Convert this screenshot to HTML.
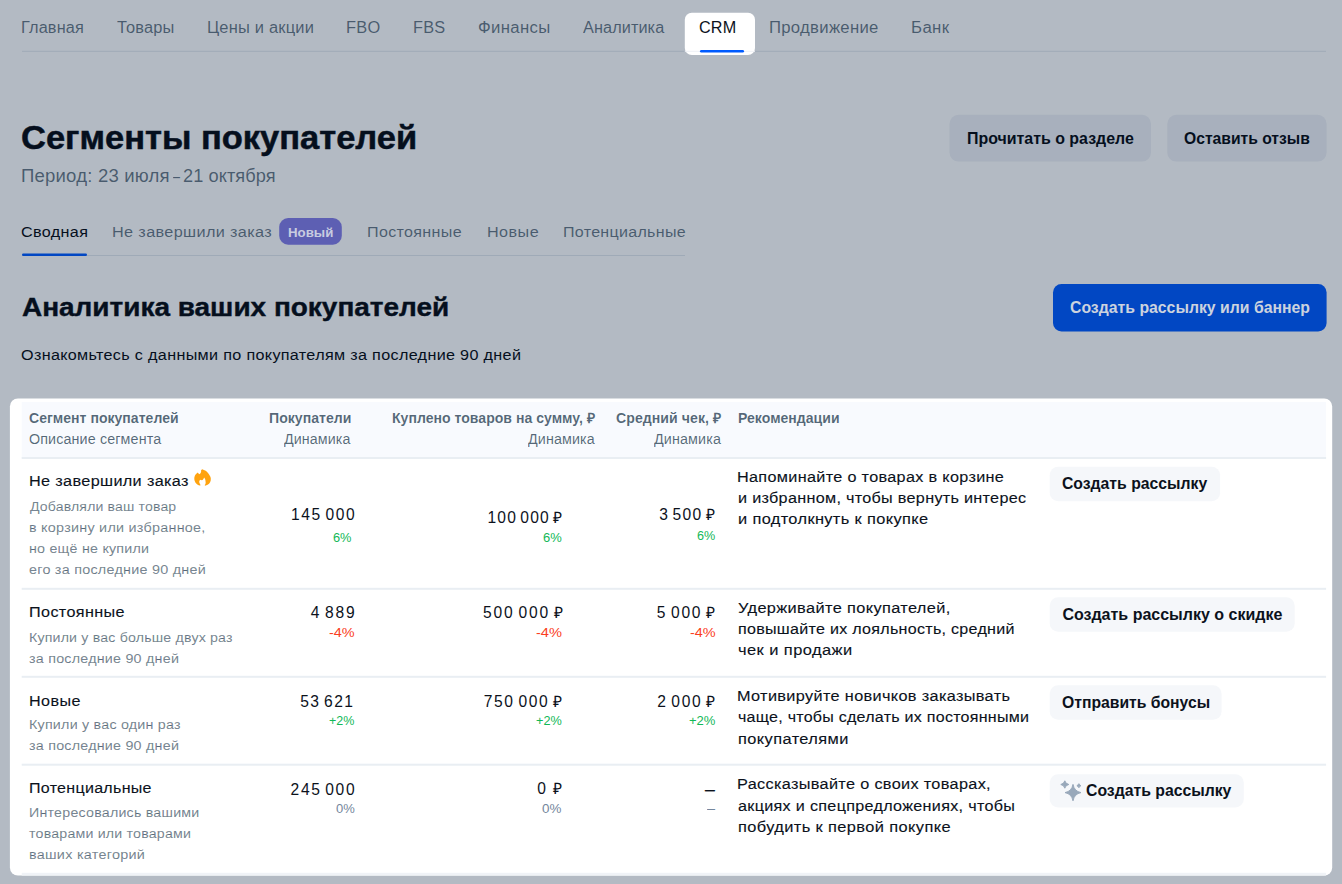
<!DOCTYPE html>
<html lang="ru"><head><meta charset="utf-8"><title>Сегменты покупателей</title>
<style>
*{box-sizing:border-box}
html,body{margin:0;padding:0}
body{width:1342px;height:884px;position:relative;overflow:hidden;background:#fff;font-family:"Liberation Sans",sans-serif;color:#001a34}
.abs,.t{position:absolute}
.t{white-space:pre;line-height:20px;margin:0;transform-origin:0 50%}
.base-layer,.dim-layer,.top-layer{position:absolute;left:0;top:0;width:1342px;height:884px}
.dim-layer{background:rgba(4,27,56,.3)}
</style></head>
<body>
<div class="base-layer">
<svg class="abs" style="left:0;top:0" width="1342" height="884" viewBox="0 0 1342 884" aria-hidden="true">
<rect x="22" y="50.8" width="1304" height="1" fill="#e3e8ee"/>
<rect x="700" y="50" width="44" height="2.5" rx="1.2" fill="#005bff"/>
<rect x="949.5" y="114.8" width="201.5" height="46.8" rx="9" fill="#eff1f6"/>
<rect x="1167.3" y="114.8" width="159.3" height="46.8" rx="9" fill="#eff1f6"/>
<rect x="1053" y="283.9" width="273.6" height="47.6" rx="8.5" fill="#005bff"/>
<rect x="22" y="255" width="663" height="1" fill="#e3e8ee"/>
<rect x="22" y="253.5" width="65" height="2.5" rx="1.2" fill="#005bff"/>
<rect x="279.2" y="218" width="62.6" height="26.7" rx="9" fill="#857de8"/>
</svg>
<span class="t" style="left:20.5px;top:17.6px;font-size:16px;color:rgba(0,26,52,.6);transform:scaleX(1.0188);letter-spacing:0.125px">Главная</span>
<span class="t" style="left:117.4px;top:17.6px;font-size:16px;color:rgba(0,26,52,.6);transform:scaleX(1.0245);letter-spacing:0.175px">Товары</span>
<span class="t" style="left:206.8px;top:17.6px;font-size:16px;color:rgba(0,26,52,.6);transform:scaleX(1.0297);letter-spacing:0.178px">Цены и акции</span>
<span class="t" style="left:346.1px;top:17.6px;font-size:16px;color:rgba(0,26,52,.6);transform:scaleX(1.0233);letter-spacing:0.250px">FBO</span>
<span class="t" style="left:413.3px;top:17.6px;font-size:16px;color:rgba(0,26,52,.6);transform:scaleX(1.0193);letter-spacing:0.196px">FBS</span>
<span class="t" style="left:477.9px;top:17.6px;font-size:16px;color:rgba(0,26,52,.6);transform:scaleX(1.0444);letter-spacing:0.317px">Финансы</span>
<span class="t" style="left:583.0px;top:17.6px;font-size:16px;color:rgba(0,26,52,.6);transform:scaleX(1.0152);letter-spacing:0.099px">Аналитика</span>
<span class="t" style="left:768.8px;top:17.6px;font-size:16px;color:rgba(0,26,52,.6);transform:scaleX(1.0432);letter-spacing:0.282px">Продвижение</span>
<span class="t" style="left:911.0px;top:17.6px;font-size:16px;color:rgba(0,26,52,.6);transform:scaleX(1.0486);letter-spacing:0.363px">Банк</span>
<span class="t" style="left:20.7px;top:128.4px;font-size:33px;color:#070b12;transform:scaleX(1.0452);-webkit-text-stroke:0.5px #070b12;font-weight:700">Сегменты покупателей</span>
<span class="t" style="left:20.7px;top:166.0px;font-size:18px;color:rgba(0,26,52,.6);transform:scaleX(1.0298);letter-spacing:0.195px">Период: 23 июля</span>
<span class="t" style="left:173.0px;top:166.0px;font-size:18px;color:rgba(0,26,52,.6);transform:scaleX(0.6983)">–</span>
<span class="t" style="left:182.9px;top:166.0px;font-size:18px;color:rgba(0,26,52,.6);transform:scaleX(1.0110);letter-spacing:0.073px">21 октября</span>
<span class="t" style="left:967.0px;top:129.2px;font-size:16px;color:#070b12;transform:scaleX(0.9952);font-weight:700">Прочитать о разделе</span>
<span class="t" style="left:1184.3px;top:129.2px;font-size:16px;color:#070b12;transform:scaleX(0.9785);font-weight:700">Оставить отзыв</span>
<span class="t" style="left:21.1px;top:221.5px;font-size:15.3px;color:#070b12;transform:scaleX(1.0548);letter-spacing:0.354px">Сводная</span>
<span class="t" style="left:111.9px;top:221.5px;font-size:15.3px;color:rgba(0,26,52,.6);transform:scaleX(1.0622);letter-spacing:0.332px">Не завершили заказ</span>
<span class="t" style="left:366.9px;top:221.5px;font-size:15.3px;color:rgba(0,26,52,.6);transform:scaleX(1.0513);letter-spacing:0.315px">Постоянные</span>
<span class="t" style="left:486.9px;top:221.5px;font-size:15.3px;color:rgba(0,26,52,.6);transform:scaleX(1.0569);letter-spacing:0.424px">Новые</span>
<span class="t" style="left:562.9px;top:221.5px;font-size:15.3px;color:rgba(0,26,52,.6);transform:scaleX(1.0476);letter-spacing:0.287px">Потенциальные</span>
<span class="t" style="left:21.5px;top:297.3px;font-size:25.5px;color:#070b12;transform:scaleX(1.0962);-webkit-text-stroke:0.4px #070b12;font-weight:700">Аналитика ваших покупателей</span>
<span class="t" style="left:21.3px;top:345.0px;font-size:15.2px;color:#070b12;transform:scaleX(1.0632);letter-spacing:0.314px">Ознакомьтесь с данными по покупателям за последние 90 дней</span>
</div>
<div class="dim-layer"></div>
<div class="top-layer">
<svg class="abs" style="left:0;top:0" width="1342" height="884" viewBox="0 0 1342 884" aria-hidden="true">
<rect x="684.8" y="12.8" width="70.2" height="42.2" rx="7" fill="#fff"/>
<rect x="684.8" y="50.8" width="70.2" height="1" fill="#eef1f5"/>
<rect x="700" y="50" width="44" height="2.5" rx="1.2" fill="#005bff"/>
<rect x="9.9" y="398.4" width="1322.3" height="477.2" rx="8" fill="#fff"/>
<rect x="21.7" y="402" width="1304.4" height="56" fill="#f8fafe"/>
<rect x="21.7" y="457" width="1304.4" height="2" fill="#e9eef3"/>
<rect x="21.7" y="587.8" width="1304.4" height="2" fill="#e9eef3"/>
<rect x="21.7" y="675.8" width="1304.4" height="2" fill="#e9eef3"/>
<rect x="21.7" y="763.7" width="1304.4" height="2" fill="#e9eef3"/>
<rect x="21.7" y="872.8" width="1304.4" height="2.8" fill="#f0f3f7"/>
<rect x="1049.7" y="466.8" width="170.4" height="34.4" rx="8.5" fill="#f5f7fa"/>
<rect x="1049.7" y="597.3" width="245" height="34.4" rx="8.5" fill="#f5f7fa"/>
<rect x="1049.7" y="685.3" width="171.9" height="34.4" rx="8.5" fill="#f5f7fa"/>
<rect x="1049.7" y="774.3" width="194.1" height="33.3" rx="8.5" fill="#f5f7fa"/>
</svg>
<svg class="abs" style="left:194.200px;top:469.400px" width="17" height="17" viewBox="0 0 17 17" aria-hidden="true"><path d="M8.15 0.2C10 0.8 11.3 1.4 12.1 2C13.6 3.2 14.7 4.6 15.4 6C16.2 7.3 16.8 8.4 16.8 9.6C16.9 11 16.7 12.2 16.1 13.2C15.500 14.3 14.7 15.2 13.6 15.8C12.8 16.3 12 16.6 11.05 16.7L10.7 16.1C11.500 15.2 11.8 14 11.6 12.9C11.500 11.8 11.4 10.9 11.05 10C10.8 9.4 10.500 8.9 10.1 8.5C9.8 9.4 9.4 10.1 8.9 10.7C8.6 11 8.2 11.2 7.8 11.2C7.3 11.2 6.7 11 6.3 10.7C5.7 11.1 5.4 11.6 5.25 12.1C5.1 12.9 5.3 13.6 5.6 14.3C5.9 15 6.2 15.7 6.7 16.3L5.6 16.500C4.500 16.2 3.500 15.7 2.7 15C1.7 14 0.9 12.8 0.54 11.4C0.3 10.4 0.2 9.4 0.36 8.5C0.6 7.4 1 6.4 1.6 5.6C2.2 4.8 2.9 4.1 3.8 3.6C4.2 4.3 4.7 4.8 5.4 5.25C6.1 4.8 6.6 4.2 6.9 3.4C7.2 2.6 7.2 1.9 7.07 1.27Z" fill="#ffa30f"/></svg>
<svg class="abs" style="left:1059px;top:779px" width="24" height="24" viewBox="0 0 24 24" aria-hidden="true"><path d="M14 5.4000000000000234Q15.28 12.29 22.0 13.600000000000023Q15.28 14.91 14 21.800000000000022Q12.72 14.91 6.0 13.600000000000023Q12.72 12.29 14 5.4000000000000234ZM5.8 1.7999999999999998Q6.52 4.83 9.8 5.5Q6.52 6.17 5.8 9.2Q5.08 6.17 1.7999999999999998 5.5Q5.08 4.83 5.8 1.7999999999999998ZM19.9 4.7Q20.50 6.10 21.9 6.7Q20.50 7.30 19.9 8.7Q19.30 7.30 17.9 6.7Q19.30 6.10 19.9 4.7Z" fill="#98a8ba" stroke="#98a8ba" stroke-width="1" stroke-linejoin="round"/></svg>
<span class="t" style="left:699.2px;top:17.6px;font-size:16px;color:#0c121c;transform:scaleX(1.0118);letter-spacing:0.141px">CRM</span>
<span class="t" style="left:288.0px;top:223.4px;font-size:13.5px;color:#c8cce0;transform:scaleX(0.9827);font-weight:700">Новый</span>
<span class="t" style="left:1069.5px;top:298.0px;font-size:16px;color:#ccd3de;transform:scaleX(0.9877);font-weight:700">Создать рассылку или баннер</span>
<span class="t" style="left:29.3px;top:408.4px;font-size:14px;color:rgba(0,26,52,.66);transform:scaleX(1.0031);letter-spacing:0.017px;font-weight:700">Сегмент покупателей</span>
<span class="t" style="left:29.4px;top:429.3px;font-size:14px;color:rgba(0,26,52,.66);transform:scaleX(1.0224);letter-spacing:0.116px">Описание сегмента</span>
<span class="t" style="left:268.9px;top:408.4px;font-size:14px;color:rgba(0,26,52,.66);transform:scaleX(1.0047);letter-spacing:0.028px;font-weight:700">Покупатели</span>
<span class="t" style="left:284.2px;top:429.3px;font-size:14px;color:rgba(0,26,52,.66);transform:scaleX(1.0173);letter-spacing:0.104px">Динамика</span>
<span class="t" style="left:392.4px;top:408.4px;font-size:14px;color:rgba(0,26,52,.66);transform:scaleX(1.0035);letter-spacing:0.018px;font-weight:700">Куплено товаров на сумму, ₽</span>
<span class="t" style="left:527.8px;top:429.3px;font-size:14px;color:rgba(0,26,52,.66);transform:scaleX(1.0206);letter-spacing:0.124px">Динамика</span>
<span class="t" style="left:615.8px;top:408.4px;font-size:14px;color:rgba(0,26,52,.66);transform:scaleX(1.0080);letter-spacing:0.042px;font-weight:700">Средний чек, ₽</span>
<span class="t" style="left:653.7px;top:429.3px;font-size:14px;color:rgba(0,26,52,.66);transform:scaleX(1.0222);letter-spacing:0.133px">Динамика</span>
<span class="t" style="left:738.1px;top:408.4px;font-size:14px;color:rgba(0,26,52,.66);transform:scaleX(1.0030);letter-spacing:0.018px;font-weight:700">Рекомендации</span>
<span class="t" style="left:28.6px;top:470.7px;font-size:15.3px;color:#0c121c;transform:scaleX(1.0612);letter-spacing:0.327px;-webkit-text-stroke:0.12px #0c121c">Не завершили заказ</span>
<span class="t" style="left:30.0px;top:496.9px;font-size:13.7px;color:rgba(0,26,52,.55);transform:scaleX(1.0286);letter-spacing:0.144px;-webkit-text-stroke:0.08px rgba(0,26,52,.55)">Добавляли ваш товар</span>
<span class="t" style="left:29.0px;top:518.0px;font-size:13.7px;color:rgba(0,26,52,.55);transform:scaleX(1.0510);letter-spacing:0.229px;-webkit-text-stroke:0.08px rgba(0,26,52,.55)">в корзину или избранное,</span>
<span class="t" style="left:29.4px;top:539.4px;font-size:13.7px;color:rgba(0,26,52,.55);transform:scaleX(1.0436);letter-spacing:0.208px;-webkit-text-stroke:0.08px rgba(0,26,52,.55)">но ещё не купили</span>
<span class="t" style="left:29.2px;top:559.7px;font-size:13.7px;color:rgba(0,26,52,.55);transform:scaleX(1.0505);letter-spacing:0.227px;-webkit-text-stroke:0.08px rgba(0,26,52,.55)">его за последние 90 дней</span>
<span class="t" style="left:291.1px;top:504.7px;font-size:15.6px;color:#0c121c;letter-spacing:1.574px;word-spacing:-2.2px">145 000</span>
<span class="t" style="left:333.0px;top:528.4px;font-size:13.4px;color:#12b857;transform:scaleX(0.9564)">6%</span>
<span class="t" style="left:487.5px;top:507.5px;font-size:15.6px;color:#0c121c;letter-spacing:1.173px;word-spacing:-2.2px">100 000 ₽</span>
<span class="t" style="left:542.5px;top:528.4px;font-size:13.4px;color:#12b857;transform:scaleX(0.9682)">6%</span>
<span class="t" style="left:659.2px;top:504.6px;font-size:15.6px;color:#0c121c;letter-spacing:1.294px;word-spacing:-2.2px">3 500 ₽</span>
<span class="t" style="left:697.0px;top:525.7px;font-size:13.4px;color:#12b857;transform:scaleX(0.9434)">6%</span>
<span class="t" style="left:736.9px;top:466.5px;font-size:15.3px;color:#0c121c;transform:scaleX(1.0600);letter-spacing:0.305px;-webkit-text-stroke:0.12px #0c121c">Напоминайте о товарах в корзине</span>
<span class="t" style="left:738.0px;top:488.1px;font-size:15.3px;color:#0c121c;transform:scaleX(1.0573);letter-spacing:0.288px;-webkit-text-stroke:0.12px #0c121c">и избранном, чтобы вернуть интерес</span>
<span class="t" style="left:738.0px;top:509.0px;font-size:15.3px;color:#0c121c;transform:scaleX(1.0705);letter-spacing:0.339px;-webkit-text-stroke:0.12px #0c121c">и подтолкнуть к покупке</span>
<span class="t" style="left:1062.3px;top:473.5px;font-size:16px;color:#0c121c;transform:scaleX(0.9844);font-weight:700">Создать рассылку</span>
<span class="t" style="left:29.0px;top:602.1px;font-size:15.3px;color:#0c121c;transform:scaleX(1.0578);letter-spacing:0.353px;-webkit-text-stroke:0.12px #0c121c">Постоянные</span>
<span class="t" style="left:28.8px;top:627.8px;font-size:13.7px;color:rgba(0,26,52,.55);transform:scaleX(1.0367);letter-spacing:0.168px;-webkit-text-stroke:0.08px rgba(0,26,52,.55)">Купили у вас больше двух раз</span>
<span class="t" style="left:29.2px;top:649.0px;font-size:13.7px;color:rgba(0,26,52,.55);transform:scaleX(1.0456);letter-spacing:0.213px;-webkit-text-stroke:0.08px rgba(0,26,52,.55)">за последние 90 дней</span>
<span class="t" style="left:310.7px;top:602.9px;font-size:15.6px;color:#0c121c;letter-spacing:1.787px;word-spacing:-2.2px">4 889</span>
<span class="t" style="left:329.3px;top:622.8px;font-size:13.4px;color:#fa3d22;transform:scaleX(1.0798)">-4%</span>
<span class="t" style="left:483.1px;top:603.0px;font-size:15.6px;color:#0c121c;letter-spacing:1.819px;word-spacing:-2.2px">500 000 ₽</span>
<span class="t" style="left:535.7px;top:622.8px;font-size:13.4px;color:#fa3d22;transform:scaleX(1.0930)">-4%</span>
<span class="t" style="left:656.8px;top:602.9px;font-size:15.6px;color:#0c121c;letter-spacing:1.729px;word-spacing:-2.2px">5 000 ₽</span>
<span class="t" style="left:689.6px;top:622.8px;font-size:13.4px;color:#fa3d22;transform:scaleX(1.0813)">-4%</span>
<span class="t" style="left:738.2px;top:598.4px;font-size:15.3px;color:#0c121c;transform:scaleX(1.0680);letter-spacing:0.352px;-webkit-text-stroke:0.12px #0c121c">Удерживайте покупателей,</span>
<span class="t" style="left:738.0px;top:618.5px;font-size:15.3px;color:#0c121c;transform:scaleX(1.0508);letter-spacing:0.265px;-webkit-text-stroke:0.12px #0c121c">повышайте их лояльность, средний</span>
<span class="t" style="left:738.1px;top:640.1px;font-size:15.3px;color:#0c121c;transform:scaleX(1.0756);letter-spacing:0.396px;-webkit-text-stroke:0.12px #0c121c">чек и продажи</span>
<span class="t" style="left:1062.4px;top:605.4px;font-size:16px;color:#0c121c;font-weight:700">Создать рассылку о скидке</span>
<span class="t" style="left:28.9px;top:691.2px;font-size:15.3px;color:#0c121c;transform:scaleX(1.0534);letter-spacing:0.399px;-webkit-text-stroke:0.12px #0c121c">Новые</span>
<span class="t" style="left:28.8px;top:715.1px;font-size:13.7px;color:rgba(0,26,52,.55);transform:scaleX(1.0451);letter-spacing:0.203px;-webkit-text-stroke:0.08px rgba(0,26,52,.55)">Купили у вас один раз</span>
<span class="t" style="left:29.2px;top:735.5px;font-size:13.7px;color:rgba(0,26,52,.55);transform:scaleX(1.0456);letter-spacing:0.213px;-webkit-text-stroke:0.08px rgba(0,26,52,.55)">за последние 90 дней</span>
<span class="t" style="left:300.2px;top:692.1px;font-size:15.6px;color:#0c121c;letter-spacing:1.473px;word-spacing:-2.2px">53 621</span>
<span class="t" style="left:329.3px;top:710.5px;font-size:13.4px;color:#12b857;transform:scaleX(0.9344)">+2%</span>
<span class="t" style="left:483.8px;top:692.1px;font-size:15.6px;color:#0c121c;letter-spacing:1.614px;word-spacing:-2.2px">750 000 ₽</span>
<span class="t" style="left:535.5px;top:710.5px;font-size:13.4px;color:#12b857;transform:scaleX(0.9479)">+2%</span>
<span class="t" style="left:657.2px;top:692.1px;font-size:15.6px;color:#0c121c;letter-spacing:1.683px;word-spacing:-2.2px">2 000 ₽</span>
<span class="t" style="left:689.1px;top:710.5px;font-size:13.4px;color:#12b857;transform:scaleX(0.9733)">+2%</span>
<span class="t" style="left:737.0px;top:686.4px;font-size:15.3px;color:#0c121c;transform:scaleX(1.0636);letter-spacing:0.328px;-webkit-text-stroke:0.12px #0c121c">Мотивируйте новичков заказывать</span>
<span class="t" style="left:738.1px;top:707.0px;font-size:15.3px;color:#0c121c;transform:scaleX(1.0474);letter-spacing:0.247px;-webkit-text-stroke:0.12px #0c121c">чаще, чтобы сделать их постоянными</span>
<span class="t" style="left:738.0px;top:729.3px;font-size:15.3px;color:#0c121c;transform:scaleX(1.0702);letter-spacing:0.393px;-webkit-text-stroke:0.12px #0c121c">покупателями</span>
<span class="t" style="left:1062.0px;top:693.2px;font-size:16px;color:#0c121c;transform:scaleX(0.9821);font-weight:700">Отправить бонусы</span>
<span class="t" style="left:28.9px;top:777.8px;font-size:15.3px;color:#0c121c;transform:scaleX(1.0470);letter-spacing:0.283px;-webkit-text-stroke:0.12px #0c121c">Потенциальные</span>
<span class="t" style="left:28.8px;top:803.2px;font-size:13.7px;color:rgba(0,26,52,.55);transform:scaleX(1.0405);letter-spacing:0.207px;-webkit-text-stroke:0.08px rgba(0,26,52,.55)">Интересовались вашими</span>
<span class="t" style="left:29.0px;top:824.3px;font-size:13.7px;color:rgba(0,26,52,.55);transform:scaleX(1.0376);letter-spacing:0.184px;-webkit-text-stroke:0.08px rgba(0,26,52,.55)">товарами или товарами</span>
<span class="t" style="left:28.6px;top:844.6px;font-size:13.7px;color:rgba(0,26,52,.55);transform:scaleX(1.0526);letter-spacing:0.254px;-webkit-text-stroke:0.08px rgba(0,26,52,.55)">ваших категорий</span>
<span class="t" style="left:290.6px;top:780.1px;font-size:15.6px;color:#0c121c;letter-spacing:1.638px;word-spacing:-2.2px">245 000</span>
<span class="t" style="left:335.6px;top:798.7px;font-size:13.4px;color:#75879d;transform:scaleX(0.9704)">0%</span>
<span class="t" style="left:705.2px;top:780.1px;font-size:15.6px;color:#0c121c;transform:scaleX(1.1281);-webkit-text-stroke:0.25px #0c121c">–</span>
<span class="t" style="left:706.8px;top:798.7px;font-size:13.4px;color:#75879d;transform:scaleX(1.0788)">–</span>
<span class="t" style="left:537.2px;top:778.8px;font-size:15.6px;color:#0c121c;letter-spacing:2.694px;word-spacing:-2.2px">0 ₽</span>
<span class="t" style="left:542.1px;top:799.4px;font-size:13.4px;color:#75879d">0%</span>
<span class="t" style="left:736.9px;top:773.9px;font-size:15.3px;color:#0c121c;transform:scaleX(1.0631);letter-spacing:0.313px;-webkit-text-stroke:0.12px #0c121c">Рассказывайте о своих товарах,</span>
<span class="t" style="left:738.0px;top:796.3px;font-size:15.3px;color:#0c121c;transform:scaleX(1.0561);letter-spacing:0.289px;-webkit-text-stroke:0.12px #0c121c">акциях и спецпредложениях, чтобы</span>
<span class="t" style="left:738.0px;top:816.8px;font-size:15.3px;color:#0c121c;transform:scaleX(1.0731);letter-spacing:0.358px;-webkit-text-stroke:0.12px #0c121c">побудить к первой покупке</span>
<span class="t" style="left:1085.8px;top:781.3px;font-size:16px;color:#0c121c;transform:scaleX(0.9861);font-weight:700">Создать рассылку</span>
</div>
</body></html>
